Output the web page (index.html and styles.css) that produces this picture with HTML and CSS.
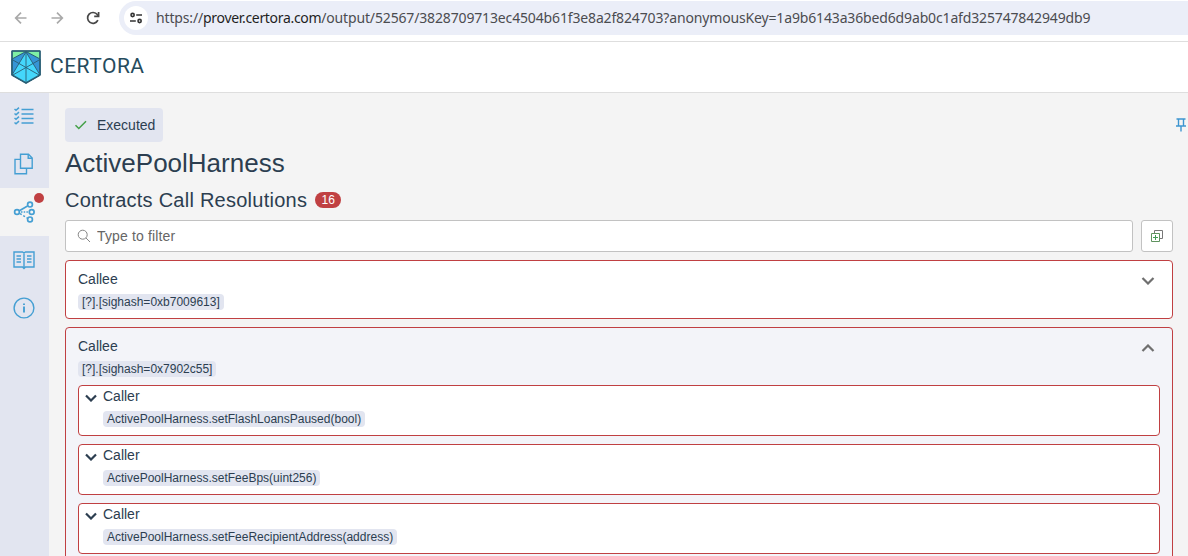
FILE: index.html
```html
<!DOCTYPE html>
<html lang="en">
<head>
    <meta charset="UTF-8">
    <meta name="viewport" content="width=device-width, initial-scale=1.0">
    <title>Certora Prover</title>
    <link rel="stylesheet" href="styles.css">
</head>
<body>
    <div class="browser-bar">
        <svg class="nav-icon" width="16" height="16" viewBox="0 0 16 16" stroke="#a9a9a9"><path d="M13.5 8H3M8 2.7L2.7 8L8 13.3"/></svg>
        <svg class="nav-icon" width="16" height="16" viewBox="0 0 16 16" stroke="#a9a9a9"><path d="M2.5 8H13M8 2.7L13.3 8L8 13.3"/></svg>
        <svg class="nav-icon" width="16" height="16" viewBox="0 0 16 16" stroke="#474747"><path d="M12.9 10.2A5.4 5.4 0 1 1 12.3 4.6L13.6 6"/><path d="M13.6 2V6.3H9.2"/></svg>
        <div class="url-box">
            <span class="site-info">
                <svg width="14" height="14" viewBox="0 0 14 14" fill="none" stroke="#333" stroke-width="1.6"><circle cx="3.6" cy="4" r="1.6"/><path d="M7.2 4H13M1 10H6.8"/><circle cx="10.6" cy="10" r="1.6"/></svg>
            </span>
            <span class="url">https://<span class="host">prover.certora.com</span>/output/52567/3828709713ec4504b61f3e8a2f824703?anonymousKey=1a9b6143a36bed6d9ab0c1afd325747842949db9</span>
        </div>
    </div>

    <header class="header">
        <svg class="logo" width="30" height="34" viewBox="0 0 30 34" stroke="#2a5f75" stroke-linejoin="round">
            <path d="M1 1H29V25L15 33L1 25Z" fill="#7ff0a5"/>
            <path d="M15 1.5L29 9V25L15 33L1 25V9Z" fill="#3695d6"/>
            <path d="M15 2L29 25L15 33L1 25Z" fill="#44d7fb" stroke="none"/>
            <path d="M15 2L1 25M15 2L29 25M15 2V33M1 9.5L29 25.5M29 9.5L1 25.5" fill="none" stroke-width="0.9"/>
            <path d="M1 1H29V25L15 33L1 25Z" fill="none" stroke-width="1.5"/>
        </svg>
        <span class="brand">CERTORA</span>
    </header>

    <div class="layout">
        <nav class="sidebar">
            <a class="side-item">
                <svg width="22" height="22" viewBox="0 0 22 22"><path d="M8.5 4.5H20.5M8.5 9H20.5M8.5 13.5H20.5M8.5 18H20.5" stroke-width="1.5"/><path d="M1.5 4L3 5.3L6 2.6M1.5 8.5L3 9.8L6 7.1M1.5 13L3 14.3L6 11.6M1.5 17.5L3 18.8L6 16.1" stroke-width="1.5"/></svg>
            </a>
            <a class="side-item">
                <svg width="22" height="22" viewBox="0 0 22 22"><path d="M7.5 1.2H15.5L19.2 5V15.2H7.5Z"/><path d="M15.2 1.5V5.2H19"/><path d="M7.5 6.4H2V20.8H13.5V15.3"/></svg>
            </a>
            <a class="side-item active">
                <svg width="22" height="22" viewBox="0 0 22 22"><g stroke-width="1.7"><circle cx="4" cy="11" r="2.4"/><circle cx="17" cy="3.6" r="2.4"/><circle cx="18.7" cy="11" r="2.4"/><circle cx="17" cy="18.4" r="2.4"/></g><path d="M6.4 9.7L14.5 5" stroke-width="1.6"/><path d="M8 11H16" stroke-dasharray="1.5 1.2"/><path d="M7 12.7L14.5 17.2" stroke-dasharray="2 1.8" stroke-width="1.5"/></svg>
                <span class="dot"></span>
            </a>
            <a class="side-item">
                <svg width="22" height="22" viewBox="0 0 22 22"><path d="M1 3H9.5L11 4L12.5 3H21V18H12.5L11 19.5L9.5 18H1ZM11 4V19.5"/><path d="M3.5 7H8M3.5 10H8M3.5 13H8M14 7H18.5M14 10H18.5M14 13H18.5" stroke-width="1.3"/></svg>
            </a>
            <a class="side-item">
                <svg width="22" height="22" viewBox="0 0 22 22"><circle cx="11" cy="11" r="9.9"/><path d="M11 9.5V15.5M11 6.5V8" stroke-width="1.9"/></svg>
            </a>
        </nav>

        <main class="content">
            <div class="status-row">
                <div class="status">
                    <svg width="14" height="12" viewBox="0 0 14 12" fill="none" stroke="#43a047" stroke-width="1.5"><path d="M1.5 6.3L4.8 9.5L12 2.2"/></svg>
                    <span>Executed</span>
                </div>
                <svg class="pin" width="12" height="14" viewBox="0 0 12 14" fill="none" stroke="#3d95d0" stroke-width="1.4"><path d="M1.5 1H10.5M3.5 1V7.5M8.5 1V7.5M1 8H11M6 8V13.5"/></svg>
            </div>

            <h1>ActivePoolHarness</h1>
            <h2>Contracts Call Resolutions <span class="badge">16</span></h2>

            <div class="filter-row">
                <label class="filter">
                    <svg width="14" height="14" viewBox="0 0 14 14" fill="none" stroke="#858585"><circle cx="5.7" cy="5.7" r="4.5"/><path d="M9 9L13 13"/></svg>
                    <input type="text" placeholder="Type to filter">
                </label>
                <button class="expand-btn" aria-label="Expand all">
                    <svg width="14" height="14" viewBox="0 0 14 14" fill="none"><path d="M4.5 4.5V1.5H12.5V9.5H9.5" stroke="#777"/><path d="M1.5 4.5H9.5V12.5H1.5Z" stroke="#5f935f"/><path d="M5.5 6V11M3 8.5H8" stroke="#439d55"/></svg>
                </button>
            </div>

            <section class="callee">
                <div class="callee-head">
                    <div>
                        <div class="label">Callee</div>
                        <code>[?].[sighash=0xb7009613]</code>
                    </div>
                    <svg class="chevron" width="14" height="8" viewBox="0 0 14 8"><path d="M1.5 1L7 6.5L12.5 1"/></svg>
                </div>
            </section>

            <section class="callee open">
                <div class="callee-head">
                    <div>
                        <div class="label">Callee</div>
                        <code>[?].[sighash=0x7902c55]</code>
                    </div>
                    <svg class="chevron" width="14" height="8" viewBox="0 0 14 8"><path d="M1.5 7L7 1.5L12.5 7"/></svg>
                </div>
                <div class="callers">
                    <div class="caller">
                        <svg class="chevron" width="12" height="8" viewBox="0 0 12 8"><path d="M1 1.5L6 6.5L11 1.5"/></svg>
                        <div>
                            <div class="label">Caller</div>
                            <code>ActivePoolHarness.setFlashLoansPaused(bool)</code>
                        </div>
                    </div>
                    <div class="caller">
                        <svg class="chevron" width="12" height="8" viewBox="0 0 12 8"><path d="M1 1.5L6 6.5L11 1.5"/></svg>
                        <div>
                            <div class="label">Caller</div>
                            <code>ActivePoolHarness.setFeeBps(uint256)</code>
                        </div>
                    </div>
                    <div class="caller">
                        <svg class="chevron" width="12" height="8" viewBox="0 0 12 8"><path d="M1 1.5L6 6.5L11 1.5"/></svg>
                        <div>
                            <div class="label">Caller</div>
                            <code>ActivePoolHarness.setFeeRecipientAddress(address)</code>
                        </div>
                    </div>
                </div>
            </section>
        </main>
    </div>
</body>
</html>
```
FILE: styles.css
```css
* {
    box-sizing: border-box;
}

body {
    margin: 0;
    height: 100vh;
    display: flex;
    flex-direction: column;
    overflow: hidden;
    font-family: "Liberation Sans", Arial, sans-serif;
    font-size: 14px;
    color: #2c3e50;
    background-color: #f4f4f4;
}

svg {
    display: block;
    flex: none;
}

/* browser toolbar */
.browser-bar {
    flex: none;
    display: flex;
    align-items: center;
    height: 42px;
    padding: 0 0 6px 13px;
    gap: 20px;
    background-color: #fff;
    border-bottom: 1px solid #dedede;
}

.nav-icon {
    fill: none;
    stroke-width: 1.7;
}

.url-box {
    flex: 1;
    display: flex;
    align-items: center;
    height: 34px;
    margin-top: 1px;
    margin-left: -2px;
    padding-left: 5px;
    gap: 8px;
    border-radius: 17px 0 0 17px;
    background-color: #ebeef8;
}

.site-info {
    display: flex;
    align-items: center;
    justify-content: center;
    width: 24px;
    height: 24px;
    border-radius: 50%;
    background-color: #fff;
}

.url {
    padding-bottom: 2px;
    font-family: "Noto Sans", sans-serif;
    font-size: 14px;
    letter-spacing: -0.15px;
    white-space: nowrap;
    color: #4b4c50;
}

.host {
    letter-spacing: -0.32px;
    color: #1f1f1f;
}

/* header */
.header {
    flex: none;
    display: flex;
    align-items: center;
    height: 51px;
    padding-left: 11px;
    gap: 9px;
    background-color: #fff;
    border-bottom: 1px solid #dedede;
}

.brand {
    padding-bottom: 2px;
    font-family: Roboto, sans-serif;
    font-size: 21px;
    letter-spacing: 0.5px;
    color: #264b5d;
}

.layout {
    flex: 1;
    display: flex;
    min-height: 0;
}

/* sidebar */
.sidebar {
    flex: none;
    width: 49px;
    background-color: #e2e5f0;
}

.side-item {
    position: relative;
    display: flex;
    align-items: center;
    justify-content: center;
    height: 48px;
    padding-right: 1px;
}

.side-item:first-child {
    height: 47px;
}

.side-item svg {
    margin-top: -1px;
    fill: none;
    stroke: #459fd3;
    stroke-width: 1.4;
}

.side-item.active {
    background-color: #f4f4f4;
}

.dot {
    position: absolute;
    top: 5px;
    right: 5px;
    width: 10px;
    height: 10px;
    border-radius: 50%;
    background-color: #c04042;
}

/* main content */
.content {
    flex: 1;
    min-width: 0;
    padding: 15px 15px 0 16px;
}

.status-row {
    display: flex;
    align-items: center;
    justify-content: space-between;
    margin-right: -14px;
}

.status {
    display: flex;
    align-items: center;
    height: 34px;
    padding: 0 8px 0 9px;
    gap: 9px;
    border-radius: 4px;
    background-color: #e2e5f0;
}

h1 {
    margin: 6px 0 0;
    font-size: 26px;
    line-height: 30px;
    font-weight: normal;
}

h2 {
    display: flex;
    align-items: center;
    gap: 8px;
    margin: 10px 0 8px;
    font-size: 20px;
    line-height: 24px;
    font-weight: normal;
    letter-spacing: 0.25px;
}

.badge {
    width: 26px;
    border-radius: 8px;
    font-size: 12px;
    line-height: 16px;
    text-align: center;
    letter-spacing: 0;
    color: #fff;
    background-color: #c04042;
}

.filter-row {
    display: flex;
    gap: 8px;
}

.filter {
    flex: 1;
    display: flex;
    align-items: center;
    height: 32px;
    padding-left: 11px;
    gap: 6px;
    border: 1px solid #c2c2c2;
    border-radius: 3px;
    background-color: #fff;
}

.filter input {
    flex: 1;
    padding: 0;
    border: none;
    outline: none;
    font-family: inherit;
    font-size: 14px;
    letter-spacing: 0.15px;
    background: none;
}

.filter input::placeholder {
    color: #666;
}

.expand-btn {
    display: flex;
    align-items: center;
    justify-content: center;
    width: 32px;
    height: 32px;
    padding: 0;
    border: 1px solid #c2c2c2;
    border-radius: 3px;
    background-color: #fff;
}

.callee {
    margin-top: 8px;
    padding: 10px 12px 8px;
    border: 1px solid #c04042;
    border-radius: 4px;
    background-color: #fff;
}

.callee.open {
    background-color: #f3f4f9;
}

.callee-head {
    display: flex;
    justify-content: space-between;
}

.callee-head .chevron {
    margin: 6px 5px 0 0;
    stroke: #6f6f6f;
}

.chevron {
    fill: none;
    stroke: #2c3e50;
    stroke-width: 2.2;
}

.label {
    line-height: 16px;
}

code {
    display: block;
    width: fit-content;
    margin-top: 7px;
    padding: 0 4px;
    border-radius: 4px;
    font-family: inherit;
    font-size: 12px;
    line-height: 16px;
    background-color: #e2e5f0;
}

.callers {
    display: flex;
    flex-direction: column;
    gap: 8px;
    margin-top: 8px;
}

.caller {
    display: flex;
    gap: 6px;
    height: 51px;
    padding: 2px 6px;
    border: 1px solid #c04042;
    border-radius: 4px;
    background-color: #fff;
}

.caller .chevron {
    margin-top: 6px;
}
```
